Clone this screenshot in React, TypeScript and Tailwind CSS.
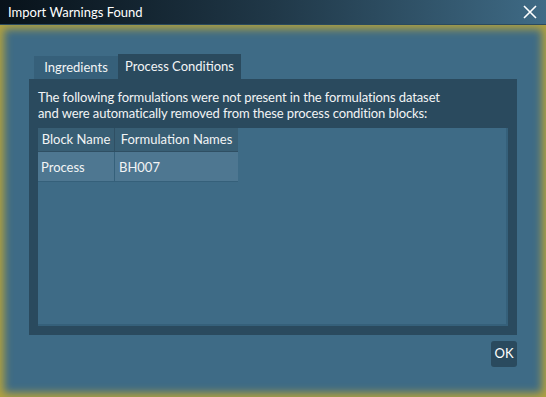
import React from "react";

export default function App() {
  const font = { fontFamily: "Lato, 'Noto Sans', sans-serif" };
  return (
    <div className="w-[546px] h-[397px] flex flex-col bg-[#3e6b86] text-[13px] text-[#f2f4f5] overflow-hidden" style={font}>
      <div className="h-[25px] flex items-center justify-between pl-[8px] pr-[9px] bg-gradient-to-r from-[#08121a] via-[#203848] to-[#3f6b86] border-b border-[#2b4a5e] shrink-0">
        <span className="text-[13px] text-white leading-none">Import Warnings Found</span>
        <svg width="14" height="14" viewBox="0 0 14 14" className="text-white">
          <path d="M1 1 L13 13 M13 1 L1 13" stroke="currentColor" strokeWidth="1.6" />
        </svg>
      </div>
      <div className="flex-1 flex flex-col px-[29px] pt-[29px] pb-[29px] shadow-[inset_0_0_9px_4px_#b3a23e]">
        <div className="flex items-end pl-[5px] h-[25px]">
          <div className="h-[23px] w-[84px] flex items-center justify-center bg-[#36607a]">Ingredients</div>
          <div className="h-[25px] w-[123px] flex items-center justify-center bg-[#2a4a5e]">Process Conditions</div>
        </div>
        <div className="h-[256px] bg-[#2a4a5e] flex flex-col px-[9px] pb-[9px]">
          <div className="pt-[10px] leading-[16px] h-[49px] tracking-[-0.1px]">
            <div>The following formulations were not present in the formulations dataset</div>
            <div>and were automatically removed from these process condition blocks:</div>
          </div>
          <div className="flex-1 bg-[#3e6b86] border-r-2 border-b-2 border-[#35607a]">
            <div className="flex w-[200px]">
              <div className="w-[77px] h-[24px] flex items-center justify-center bg-[#385e74] border-r border-b border-[#2f4f63]">Block Name</div>
              <div className="w-[123px] h-[24px] flex items-center justify-center bg-[#385e74] border-b border-[#2f4f63]">Formulation Names</div>
            </div>
            <div className="flex w-[200px] bg-[#4e7791] border-b border-[#35607a]">
              <div className="w-[77px] h-[29px] flex items-center pl-[3px] pt-[2px] border-r border-[#35607a]">Process</div>
              <div className="w-[123px] h-[29px] flex items-center pl-[4px] pt-[2px]">BH007</div>
            </div>
          </div>
        </div>
        <div className="flex justify-end pt-[6px]">
          <button className="w-[26px] h-[26px] rounded-[3px] bg-[#2a4a5e] text-white flex items-center justify-center">OK</button>
        </div>
      </div>
    </div>
  );
}
